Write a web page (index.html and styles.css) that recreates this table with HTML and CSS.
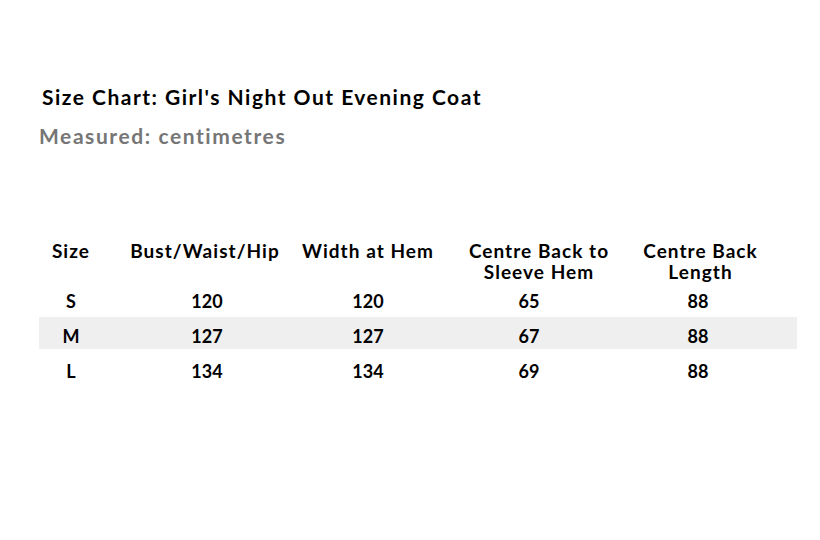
FILE: index.html
```html
<!DOCTYPE html>
<html lang="en">
<head>
<meta charset="utf-8">
<title>Size Chart</title>
<link rel="stylesheet" href="styles.css">
</head>
<body>
<main class="chart">
  <h1 class="title">Size Chart: Girl's Night Out Evening Coat</h1>
  <p class="unit">Measured: centimetres</p>
  <div class="table">
    <div class="row head">
      <div class="cell">Size</div>
      <div class="cell">Bust/Waist/Hip</div>
      <div class="cell">Width at Hem</div>
      <div class="cell">Centre Back to<br>Sleeve Hem</div>
      <div class="cell">Centre Back<br>Length</div>
    </div>
    <div class="row">
      <div class="cell">S</div>
      <div class="cell c2">120</div>
      <div class="cell">120</div>
      <div class="cell c4">65</div>
      <div class="cell c5">88</div>
    </div>
    <div class="row alt">
      <div class="cell">M</div>
      <div class="cell c2">127</div>
      <div class="cell">127</div>
      <div class="cell c4">67</div>
      <div class="cell c5">88</div>
    </div>
    <div class="row">
      <div class="cell">L</div>
      <div class="cell c2">134</div>
      <div class="cell">134</div>
      <div class="cell c4">69</div>
      <div class="cell c5">88</div>
    </div>
  </div>
</main>
</body>
</html>
```

FILE: styles.css
```css
html, body {
  margin: 0;
  padding: 0;
  background: #ffffff;
}

body {
  font-family: Lato, "Open Sans", sans-serif;
  font-weight: 700;
  color: #000000;
}

.chart {
  padding: 84px 23px 0 39px;
}

.title {
  margin: 0 0 13px 3px;
  font-size: 21px;
  line-height: 26px;
  font-weight: 700;
  letter-spacing: 0.071em;
}

.unit {
  margin: 0;
  font-size: 21px;
  line-height: 26px;
  color: #767676;
  letter-spacing: 0.075em;
}

.table {
  margin-top: 91px;
  display: flex;
  flex-direction: column;
  gap: 3px;
  font-size: 18px;
}

.row {
  display: grid;
  grid-template-columns: 64px 204px 122px 220px 103px 45px;
  height: 32px;
  box-sizing: border-box;
  padding-top: 9px;
  line-height: 20px;
}

.row.head {
  height: 39px;
  padding-top: 0;
  font-size: 19px;
  line-height: 21px;
  letter-spacing: 0.055em;
}

.row.alt {
  background: #efefef;
}

.cell {
  display: flex;
  justify-content: center;
  align-items: flex-start;
  text-align: center;
  white-space: nowrap;
  min-width: 0;
}

.c2 {
  padding-left: 4px;
}

.c4 {
  padding-right: 20px;
}

.c5 {
  padding-right: 5px;
}
```
